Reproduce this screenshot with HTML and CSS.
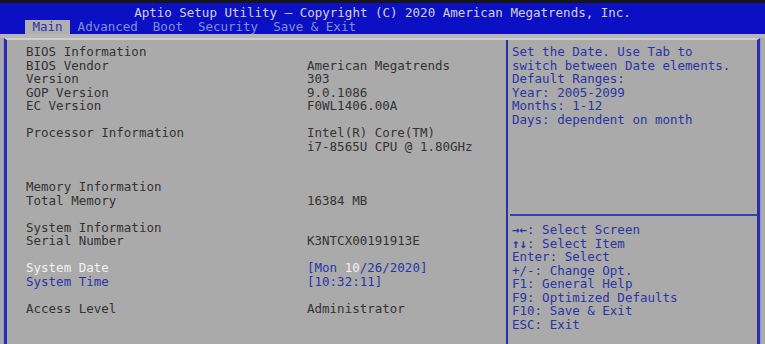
FILE: index.html
```html
<!DOCTYPE html>
<html lang="en">
<head>
    <meta charset="UTF-8">
    <title>Aptio Setup Utility</title>
    <link rel="stylesheet" href="styles.css">
</head>
<body>
    <div class="screen">
        <header class="titlebar">
            <div class="title">Aptio Setup Utility – Copyright (C) 2020 American Megatrends, Inc.</div>
            <nav class="tabs">
                <span class="tab active">Main</span>
                <span class="tab">Advanced</span>
                <span class="tab">Boot</span>
                <span class="tab">Security</span>
                <span class="tab">Save &amp; Exit</span>
            </nav>
        </header>
        <div class="strip"></div>

        <main class="panel">
            <section class="settings">
                <div class="row"><span>BIOS Information</span><span></span></div>
                <div class="row"><span>BIOS Vendor</span><span>American Megatrends</span></div>
                <div class="row"><span>Version</span><span>303</span></div>
                <div class="row"><span>GOP Version</span><span>9.0.1086</span></div>
                <div class="row"><span>EC Version</span><span>F0WL1406.00A</span></div>
                <div class="row gap"></div>
                <div class="row"><span>Processor Information</span><span>Intel(R) Core(TM)</span></div>
                <div class="row"><span></span><span>i7-8565U CPU @ 1.80GHz</span></div>
                <div class="row gap"></div>
                <div class="row gap"></div>
                <div class="row"><span>Memory Information</span><span></span></div>
                <div class="row"><span>Total Memory</span><span>16384 MB</span></div>
                <div class="row gap"></div>
                <div class="row"><span>System Information</span><span></span></div>
                <div class="row"><span>Serial Number</span><span>K3NTCX00191913E</span></div>
                <div class="row gap"></div>
                <div class="row editable selected"><span>System Date</span><span>[Mon <b class="cursor">10</b>/26/2020]</span></div>
                <div class="row editable"><span>System Time</span><span>[10:32:11]</span></div>
                <div class="row gap"></div>
                <div class="row"><span>Access Level</span><span>Administrator</span></div>
            </section>

            <aside class="help">
                <div class="help-top">
                    <div class="line">Set the Date. Use Tab to</div>
                    <div class="line">switch between Date elements.</div>
                    <div class="line">Default Ranges:</div>
                    <div class="line">Year: 2005-2099</div>
                    <div class="line">Months: 1-12</div>
                    <div class="line">Days: dependent on month</div>
                </div>
                <div class="help-keys">
                    <div class="line"><b class="arrows">→←</b>: Select Screen</div>
                    <div class="line"><b class="arrows">↑↓</b>: Select Item</div>
                    <div class="line">Enter: Select</div>
                    <div class="line">+/-: Change Opt.</div>
                    <div class="line">F1: General Help</div>
                    <div class="line">F9: Optimized Defaults</div>
                    <div class="line">F10: Save &amp; Exit</div>
                    <div class="line">ESC: Exit</div>
                </div>
            </aside>
        </main>
    </div>
</body>
</html>
```

FILE: styles.css
```css
html, body {
    margin: 0;
    padding: 0;
    background: #aaaaaa;
}

.screen {
    width: 765px;
    height: 344px;
    overflow: hidden;
    font-family: "DejaVu Sans Mono", monospace;
    font-size: 12.5px;
    line-height: 13.5px;
    background: #aaaaaa;
    display: flex;
    flex-direction: column;
}

.titlebar {
    flex-shrink: 0;
    background: #0c10c4;
    border-top: 3px solid #161616;
    padding-top: 3px;
}

.title {
    text-align: center;
    color: #d2d2dc;
    height: 14px;
    line-height: 14px;
}

.tabs {
    display: flex;
    padding-left: 25px;
    height: 14px;
    line-height: 14px;
}

.tab {
    padding: 0 7.5px;
    color: #8290d8;
    white-space: pre;
}

.tab.active {
    background: #b0b0b0;
    color: #2a34a6;
}

.strip {
    flex-shrink: 0;
    height: 4px;
    background: #b6b6b6;
}

.panel {
    flex: 1;
    min-height: 0;
    display: flex;
    margin: 0 5px 0 4px;
    border-top: 2px solid #cfcfcf;
    border-left: 3px solid #2a2ea8;
    border-right: 3px solid #2a2ea8;
    box-shadow: -1px 0 0 #8f96d8, 1px 0 0 #8f96d8;
}

.settings {
    width: 480px;
    padding: 5px 0 0 19px;
    color: #333333;
}

.row {
    display: grid;
    grid-template-columns: 281px 1fr;
    height: 13.5px;
    white-space: pre;
}

.row.editable {
    color: #2a34a6;
}

.row.selected > span:first-child {
    color: #f2f2f2;
}

.cursor {
    font-weight: normal;
    color: #f2f2f2;
}

.help {
    flex: 1;
    display: flex;
    flex-direction: column;
    border-left: 2px solid #2a2ea8;
    color: #2a34a6;
}

.line {
    height: 13.5px;
    white-space: pre;
}

.arrows {
    font-weight: bold;
}

.help-top {
    flex-shrink: 0;
    height: 176px;
    padding: 5px 0 0 2px;
    margin-left: 2px;
    border-bottom: 2px solid #3a40b0;
    box-sizing: border-box;
}

.help-keys {
    padding: 7px 0 0 4px;
}
```
